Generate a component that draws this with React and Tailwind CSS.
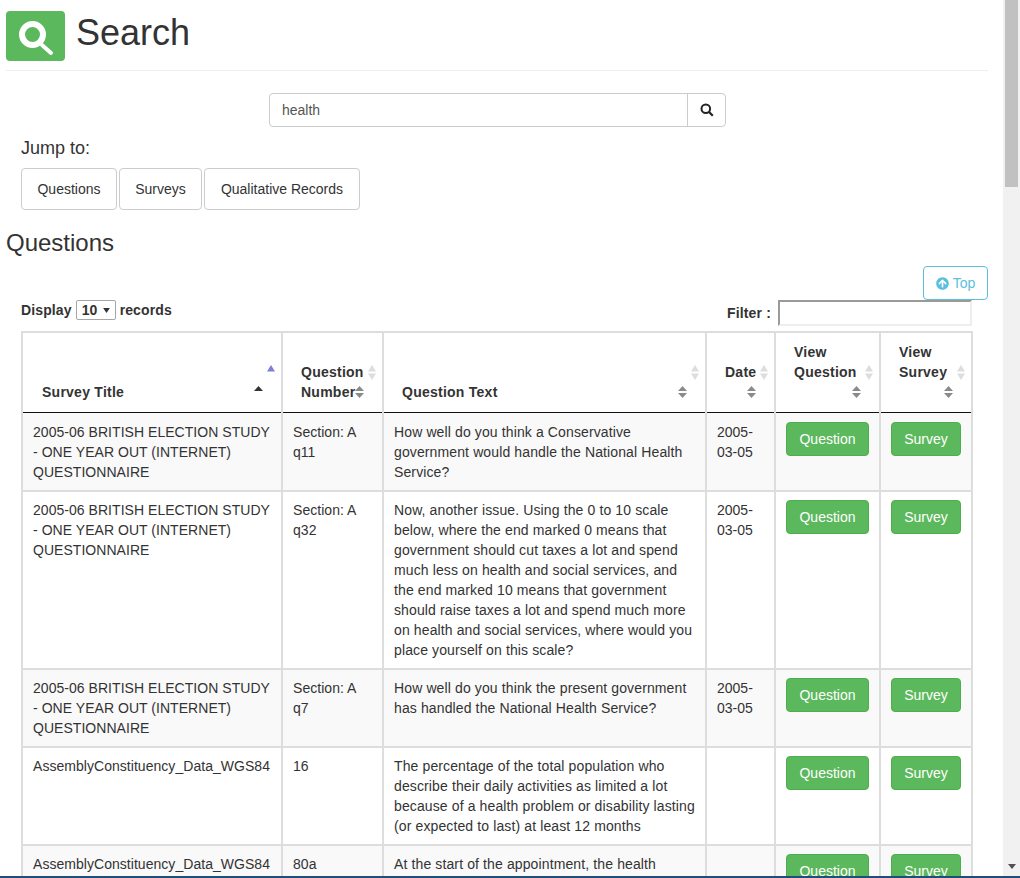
import React from "react";
import { FaArrowCircleUp } from "react-icons/fa";

const GREEN_BTN = "flex h-[34px] items-center justify-center rounded border border-[#4cae4c] bg-[#5cb85c] text-sm text-white";

function Light({ fill = "#ddd", up = true, down = true, className }) {
  return (
    <svg viewBox="0 0 8 15" width="8" height="15" className={className}>
      {up && <path d="M4 0 L8 6.5 L0 6.5 Z" fill={fill} />}
      {down && <path d="M0 8.5 L8 8.5 L4 15 Z" fill={fill} />}
    </svg>
  );
}

function Dark({ fill = "#8a8a8a", down = true, className }) {
  return (
    <svg viewBox="0 0 9 12" width="9" height="12" className={className}>
      <path d="M4.5 0 L9 5 L0 5 Z" fill={fill} />
      {down && <path d="M0 7 L9 7 L4.5 12 Z" fill={fill} />}
    </svg>
  );
}

function Th({ children, first, blue, black }) {
  return (
    <th className={`relative h-[80px] border-x-2 border-t-2 border-b border-b-[#111] border-x-[#ddd] border-t-[#ddd] ${first ? "pl-[19px]" : "pl-[18px]"} pr-2 pt-[9px] pb-[10px] align-bottom text-left text-sm leading-5 font-bold tracking-[0.25px] text-[#333]`}>
      {children}
      <Light fill={blue ? "#7d7fd8" : "#ddd"} down={!blue} className="absolute right-[6px] top-[32px]" />
      <Dark fill={black ? "#333" : "#8a8a8a"} down={!black} className="absolute right-[18px] top-[53px]" />
    </th>
  );
}

const rows = [
  ["2005-06 BRITISH ELECTION STUDY - ONE YEAR OUT (INTERNET) QUESTIONNAIRE", "Section: A q11", "How well do you think a Conservative government would handle the National Health Service?", "2005-03-05"],
  ["2005-06 BRITISH ELECTION STUDY - ONE YEAR OUT (INTERNET) QUESTIONNAIRE", "Section: A q32", "Now, another issue. Using the 0 to 10 scale below, where the end marked 0 means that government should cut taxes a lot and spend much less on health and social services, and the end marked 10 means that government should raise taxes a lot and spend much more on health and social services, where would you place yourself on this scale?", "2005-03-05"],
  ["2005-06 BRITISH ELECTION STUDY - ONE YEAR OUT (INTERNET) QUESTIONNAIRE", "Section: A q7", "How well do you think the present government has handled the National Health Service?", "2005-03-05"],
  ["AssemblyConstituency_Data_WGS84", "16", "The percentage of the total population who describe their daily activities as limited a lot because of a health problem or disability lasting (or expected to last) at least 12 months", ""],
  ["AssemblyConstituency_Data_WGS84", "80a", "At the start of the appointment, the health", ""],
];

const td = "border-x-2 border-b-2 border-[#ddd] align-top text-sm leading-5 text-[#333]";

export default function App() {
  return (
    <div className="h-[878px] w-[1020px] overflow-hidden bg-white font-['Liberation_Sans',Arial,sans-serif] text-[#333]">
      <div className="flex h-[876px]">
        <main className="h-full w-[1003px] shrink-0 overflow-hidden">
          <div className="ml-[6px] w-[982px] border-b border-[#eee] pt-[11px] pb-[9px]">
            <div className="flex items-center gap-[11px]">
              <div className="flex h-[50px] w-[59px] items-center justify-center rounded bg-[#5cb85c]">
                <svg viewBox="0 0 59 50" width="59" height="50">
                  <circle cx="26.5" cy="23.5" r="10.5" fill="none" stroke="#fff" strokeWidth="6" />
                  <path d="M36 34 L45 42" stroke="#fff" strokeWidth="4" strokeLinecap="round" />
                </svg>
              </div>
              <h1 className="-mt-[7px] text-[36px] leading-[40px] font-normal text-[#333]">Search</h1>
            </div>
          </div>

          <div className="mt-[22px] ml-[269px] flex h-[34px] w-[457px] rounded border border-[#ccc]">
            <div className="flex flex-1 items-center pl-3 text-sm text-[#555]">health</div>
            <div className="flex w-[38px] items-center justify-center border-l border-[#ccc]">
              <svg viewBox="0 0 14 14" width="14" height="14">
                <circle cx="5.8" cy="5.8" r="4.3" fill="none" stroke="#222" strokeWidth="2" />
                <path d="M9 9 L12.8 12.8" stroke="#222" strokeWidth="2.2" />
              </svg>
            </div>
          </div>

          <div className="mt-[10px] ml-[21px] text-[18px] leading-[22px] text-[#333]">Jump to:</div>
          <div className="mt-[9px] ml-[21px] flex gap-[2px]">
            <div className="flex h-[42px] w-[96px] items-center justify-center rounded border border-[#ccc] text-sm text-[#333]">Questions</div>
            <div className="flex h-[42px] w-[83px] items-center justify-center rounded border border-[#ccc] text-sm text-[#333]">Surveys</div>
            <div className="flex h-[42px] w-[156px] items-center justify-center rounded border border-[#ccc] text-sm text-[#333]">Qualitative Records</div>
          </div>

          <h2 className="mt-[20px] ml-[6px] text-2xl leading-[26px] font-normal text-[#333]">Questions</h2>

          <div className="mt-[10px] ml-[923px] flex h-[34px] w-[65px] items-center justify-center gap-[4px] rounded border border-[#5bc0de] text-sm text-[#5bc0de]">
            <FaArrowCircleUp size={13} />
            <span>Top</span>
          </div>

          <div className="ml-[21px] flex h-[31px] w-[951px] items-start justify-between">
            <div className="flex items-center gap-[4px] text-sm leading-5 font-bold tracking-[0.12px] text-[#333]">
              <span>Display</span>
              <span className="flex h-5 w-10 items-center justify-between rounded-[2px] border border-[#a6a6a6] px-[5px]">
                10
                <svg viewBox="0 0 8 6" width="7" height="5"><path d="M0 0 L8 0 L4 6 Z" fill="#333" /></svg>
              </span>
              <span>records</span>
            </div>
            <div className="flex items-start gap-[7px]">
              <span className="mt-[3px] text-sm leading-5 font-bold tracking-[0.15px] text-[#333]">Filter :</span>
              <div className="h-[26px] w-[194px] border-2 border-t-[#9a9a9a] border-l-[#9a9a9a] border-r-[#eee] border-b-[#eee]" />
            </div>
          </div>

          <table className="ml-[21px] w-[950px] table-fixed border-collapse">
            <colgroup>
              <col className="w-[260px]" />
              <col className="w-[101px]" />
              <col className="w-[323px]" />
              <col className="w-[69px]" />
              <col className="w-[105px]" />
              <col className="w-[92px]" />
            </colgroup>
            <thead>
              <tr>
                <Th first blue black>Survey Title</Th>
                <Th>Question Number</Th>
                <Th>Question Text</Th>
                <Th>Date<span className="block h-5" /></Th>
                <Th>View<br />Question<span className="block h-5" /></Th>
                <Th>View<br />Survey<span className="block h-5" /></Th>
              </tr>
            </thead>
            <tbody>
              {rows.map((r, i) => {
                const pad = i === 0 ? "pt-[9px] pb-2" : "py-2";
                return (
                  <tr key={i} className={i % 2 === 0 ? "bg-[#f9f9f9]" : "bg-white"}>
                    <td className={`${td} ${pad} px-[10px] tracking-[0.04px]`}>{r[0]}</td>
                    <td className={`${td} ${pad} px-[10px] tracking-[0.04px]`}>{r[1]}</td>
                    <td className={`${td} ${pad} pl-[10px] pr-2 tracking-[0.12px]`}>{r[2]}</td>
                    <td className={`${td} ${pad} px-[10px]`}>{r[3]}</td>
                    <td className={`${td} ${pad} px-[10px]`}>
                      <div className={`${GREEN_BTN} w-[83px]`}>Question</div>
                    </td>
                    <td className={`${td} ${pad} px-[10px]`}>
                      <div className={`${GREEN_BTN} w-[70px]`}>Survey</div>
                    </td>
                  </tr>
                );
              })}
            </tbody>
          </table>
        </main>

        <aside className="flex h-full w-[17px] shrink-0 flex-col items-center justify-between bg-[#f1f1f1]">
          <div className="h-[187px] w-[13px] bg-[#c1c1c1]" />
          <svg viewBox="0 0 8 5" width="8" height="5" className="mb-[7px]"><path d="M0 0 L8 0 L4 5 Z" fill="#505050" /></svg>
        </aside>
      </div>
      <div className="h-[2px] bg-[#1f4e79]" />
    </div>
  );
}
